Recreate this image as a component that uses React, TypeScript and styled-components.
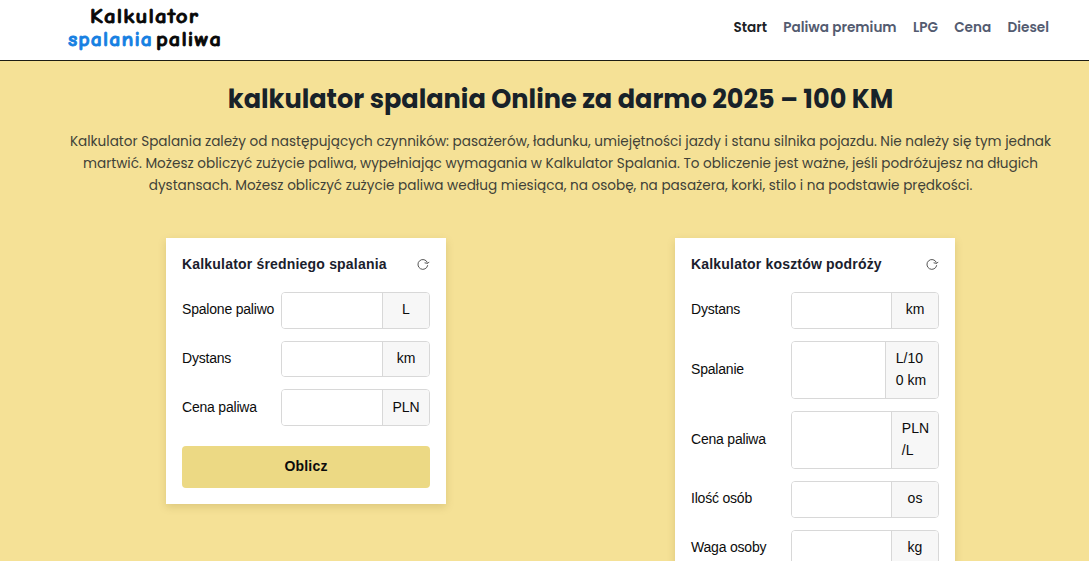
import React from 'react';
import styled, { createGlobalStyle } from 'styled-components';

const GlobalStyle = createGlobalStyle`
  * {
    box-sizing: border-box;
  }

  body {
    margin: 0;
    background: #f5e196;
    overflow: hidden;
  }
`;

const Page = styled.div`
  height: 561px;
  overflow: hidden;
  font-family: Poppins, Inter, sans-serif;
`;

const Header = styled.header`
  display: flex;
  justify-content: space-between;
  align-items: flex-start;
  height: 61px;
  padding: 0 40px 0 64px;
  background: #fff;
  border-bottom: 1px solid #1c1c14;
`;

const LogoArt = styled.svg`
  display: block;
  font-family: 'Comic Neue', Lato, sans-serif;
  font-size: 20.5px;
  font-weight: 700;
  letter-spacing: 1px;
  stroke-width: 0.8px;
  stroke-linejoin: round;
`;

const Nav = styled.nav`
  display: flex;
  gap: 16.3px;
  padding-top: 17px;
`;

const NavLink = styled.a<{ $active?: boolean }>`
  color: ${({ $active }) => ($active ? '#1c2226' : '#535b70')};
  font-size: 13.6px;
  font-weight: 600;
  line-height: 22px;
  white-space: nowrap;
  text-decoration: none;
`;

const Intro = styled.section`
  display: flex;
  flex-direction: column;
  align-items: center;
  padding: 20px 0 0 32px;
`;

const Title = styled.h1`
  margin: 0 0 13px;
  color: #182229;
  font-size: 25.6px;
  font-weight: 700;
  line-height: 37px;
  white-space: nowrap;
`;

const Description = styled.p`
  width: 990px;
  margin: 0;
  color: #414238;
  font-size: 13.6px;
  line-height: 22px;
  text-align: center;
`;

const Calculators = styled.main`
  display: flex;
  align-items: flex-start;
  gap: 229px;
  padding: 41px 0 0 166px;
`;

const Card = styled.section`
  width: 280px;
  padding: 16px;
  background: #fff;
  box-shadow: 0 3px 8px rgba(110, 90, 10, 0.18);
  color: #0c0c0c;
  font-family: 'Liberation Sans', Arial, sans-serif;
  font-size: 14px;
  line-height: 22px;
`;

const CardHead = styled.div`
  display: flex;
  justify-content: space-between;
  height: 38px;
`;

const CardTitle = styled.h2`
  margin: 0;
  color: #1a202c;
  font-size: 14px;
  font-weight: 700;
  line-height: 21px;
  letter-spacing: 0.19px;
`;

const ResetButton = styled.button`
  width: 14px;
  height: 21px;
  padding: 0;
  border: 0;
  background: none;

  svg {
    display: block;
  }
`;

const Fields = styled.div<{ $gap: number }>`
  display: grid;
  gap: ${({ $gap }) => $gap}px;
`;

const Field = styled.label<{ $labelWidth: number }>`
  display: grid;
  grid-template-columns: ${({ $labelWidth }) => $labelWidth}px 1fr;
  align-items: center;
  white-space: nowrap;
`;

const Label = styled.span`
  padding-bottom: 2px;
  letter-spacing: -0.2px;
`;

const InputGroup = styled.div`
  display: flex;
  min-height: 36.7px;
  border: 1px solid #d8d8d8;
  border-radius: 4px;
  overflow: hidden;
`;

const Input = styled.input`
  flex: 1;
  min-width: 0;
  border: 0;
  outline: 0;
  background: #fff;
`;

const Unit = styled.span<{ $width: number; $wrapped: boolean }>`
  display: flex;
  flex-direction: column;
  justify-content: center;
  align-items: ${({ $wrapped }) => ($wrapped ? 'flex-start' : 'center')};
  width: ${({ $width }) => $width}px;
  padding: ${({ $wrapped }) => ($wrapped ? '4.9px 0 6.9px 9.8px' : '5.2px 0 7.2px')};
  border-left: 1px solid #d8d8d8;
  background: #f7f7f7;
`;

const Submit = styled.button`
  width: 100%;
  height: 42px;
  margin-top: 20px;
  padding: 0 0 2px;
  border: 0;
  border-radius: 4px;
  background: #ecd984;
  color: #0c0c0c;
  font: 700 14px 'Liberation Sans', Arial, sans-serif;
  letter-spacing: 0.2px;
`;

type FieldData = { label: string; unit: string[]; unitWidth?: number };

const links = ['Start', 'Paliwa premium', 'LPG', 'Cena', 'Diesel'];

const averageFields: FieldData[] = [
  { label: 'Spalone paliwo', unit: ['L'] },
  { label: 'Dystans', unit: ['km'] },
  { label: 'Cena paliwa', unit: ['PLN'] },
];

const tripFields: FieldData[] = [
  { label: 'Dystans', unit: ['km'] },
  { label: 'Spalanie', unit: ['L/10', '0 km'], unitWidth: 53 },
  { label: 'Cena paliwa', unit: ['PLN', '/L'] },
  { label: 'Ilość osób', unit: ['os'] },
  { label: 'Waga osoby', unit: ['kg'] },
];

const Logo: React.FC = () => (
  <LogoArt width="160" height="56" viewBox="0 0 160 56" role="img">
    <text x="26" y="23" textLength="109" lengthAdjust="spacingAndGlyphs" fill="#080808" stroke="#080808">Kalkulator</text>
    <text x="4" y="46" textLength="85" lengthAdjust="spacingAndGlyphs" fill="#1680e2" stroke="#1680e2">spalania</text>
    <text x="92" y="46" textLength="66" lengthAdjust="spacingAndGlyphs" fill="#080808" stroke="#080808">paliwa</text>
  </LogoArt>
);

const ResetIcon: React.FC = () => (
  <svg width="14" height="21" viewBox="0 0 14 21" fill="none" stroke="#444" strokeWidth="0.9">
    <path d="M11.4 8.6A4.9 4.9 0 1 0 11.7 11.2" />
    <path d="M8.6 8.8L11.8 9.4L13.2 7.9" />
  </svg>
);

type CalculatorProps = {
  title: string;
  fields: FieldData[];
  labelWidth: number;
  rowGap: number;
  submitLabel?: string;
};

const Calculator: React.FC<CalculatorProps> = ({ title, fields, labelWidth, rowGap, submitLabel }) => (
  <Card>
    <CardHead>
      <CardTitle>{title}</CardTitle>
      <ResetButton type="button">
        <ResetIcon />
      </ResetButton>
    </CardHead>
    <Fields $gap={rowGap}>
      {fields.map((field) => (
        <Field key={field.label} $labelWidth={labelWidth}>
          <Label>{field.label}</Label>
          <InputGroup>
            <Input />
            <Unit $width={field.unitWidth ?? 47} $wrapped={field.unit.length > 1}>
              {field.unit.map((line) => (
                <span key={line}>{line}</span>
              ))}
            </Unit>
          </InputGroup>
        </Field>
      ))}
    </Fields>
    {submitLabel && <Submit type="button">{submitLabel}</Submit>}
  </Card>
);

const App: React.FC = () => {
  return (
    <Page>
      <GlobalStyle />
      <Header>
        <Logo />
        <Nav>
          {links.map((link, index) => (
            <NavLink key={link} $active={index === 0}>
              {link}
            </NavLink>
          ))}
        </Nav>
      </Header>
      <Intro>
        <Title>kalkulator spalania Online za darmo 2025 – 100 KM</Title>
        <Description>
          Kalkulator Spalania zależy od następujących czynników: pasażerów, ładunku, umiejętności jazdy i stanu silnika
          pojazdu. Nie należy się tym jednak martwić. Możesz obliczyć zużycie paliwa, wypełniając wymagania w Kalkulator
          Spalania. To obliczenie jest ważne, jeśli podróżujesz na długich dystansach. Możesz obliczyć zużycie paliwa
          według miesiąca, na osobę, na pasażera, korki, stilo i na podstawie prędkości.
        </Description>
      </Intro>
      <Calculators>
        <Calculator
          title="Kalkulator średniego spalania"
          fields={averageFields}
          labelWidth={99}
          rowGap={12}
          submitLabel="Oblicz"
        />
        <Calculator
          title="Kalkulator kosztów podróży"
          fields={tripFields}
          labelWidth={100}
          rowGap={12.2}
        />
      </Calculators>
    </Page>
  );
};

export default App;
